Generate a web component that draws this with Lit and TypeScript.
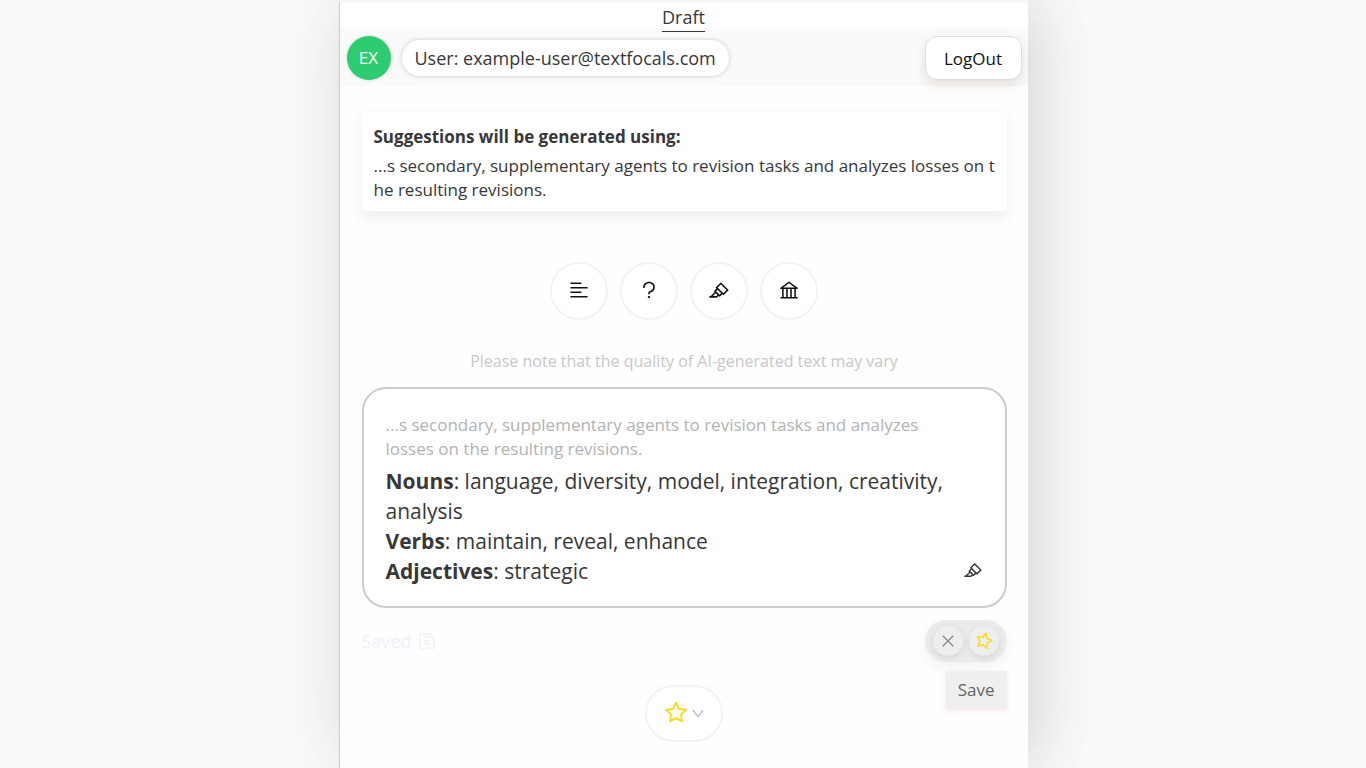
import { LitElement, html, css, svg } from "lit";
import { customElement, property } from "lit/decorators.js";

const ICONS = {
  align: svg`<path d="M120 230h496c4.400 0 8-3.600 8-8v-56c0-4.400-3.600-8-8-8H120c-4.400 0-8 3.600-8 8v56c0 4.400 3.600 8 8 8zm0 424h496c4.400 0 8-3.600 8-8v-56c0-4.400-3.600-8-8-8H120c-4.400 0-8 3.600-8 8v56c0 4.400 3.600 8 8 8zm784 140H120c-4.400 0-8 3.600-8 8v56c0 4.400 3.600 8 8 8h784c4.400 0 8-3.600 8-8v-56c0-4.400-3.600-8-8-8zm0-424H120c-4.400 0-8 3.600-8 8v56c0 4.400 3.600 8 8 8h784c4.400 0 8-3.600 8-8v-56c0-4.400-3.600-8-8-8z"/>`,
  question: svg`<path d="M764 280.9c-14-30.6-33.9-58.1-59.3-81.6C653.1 151.4 584.6 125 512 125s-141.1 26.4-192.7 74.2c-25.4 23.6-45.3 51-59.3 81.7-14.6 32-22 65.9-22 100.9v27c0 6.2 5 11.2 11.2 11.2h54c6.2 0 11.2-5 11.2-11.2v-27c0-99.5 88.6-180.4 197.6-180.4s197.6 80.9 197.6 180.4c0 40.8-14.5 79.2-42 111.2-27.2 31.7-65.600 54.4-108.1 64-24.3 5.5-46.2 19.2-61.7 38.8a110.85 110.85 0 0 0-23.9 68.600v31.4c0 6.2 5 11.2 11.2 11.2h54c6.2 0 11.2-5 11.2-11.2v-31.4c0-15.7 10.9-29.5 26-32.9 58.4-13.2 111.4-44.7 149.3-88.7 19.1-22.3 34-47.1 44.3-74 10.700-27.9 16.1-57.2 16.1-87 0-35-7.400-69-22-100.9zM512 787c-30.9 0-56 25.1-56 56s25.1 56 56 56 56-25.1 56-56-25.1-56-56-56z"/>`,
  highlight: svg`<path d="M957.6 507.4L603.2 158.2a7.9 7.9 0 0 0-11.2 0L353.3 393.4a8.03 8.03 0 0 0-.1 11.3l.1.1 40 39.4-117.2 115.3a8.03 8.03 0 0 0-.1 11.3l.1.1 39.5 38.9-189.1 187H72.1c-4.4 0-8.1 3.6-8.1 8V860c0 4.4 3.6 8 8 8h344.9c2.1 0 4.1-.8 5.6-2.3l76.1-75.6 40.4 39.8a7.9 7.9 0 0 0 11.2 0l117.1-115.6 40.1 39.5a7.9 7.9 0 0 0 11.2 0l238.7-235.2c3.4-3 3.4-8 .3-11.2zM389.8 796.2H229.6l134.4-133 80.1 78.9-54.3 54.1zm154.8-62.1L373.2 565.2l68.6-67.6 171.4 168.9-68.6 67.6zM713.1 658L450.3 399.1 597.6 254l262.8 259-147.3 145z"/>`,
  bank: svg`<path d="M894 462c30.9 0 43.8-39.7 18.7-58L530.8 126.2a31.81 31.81 0 0 0-37.6 0L111.3 404c-25.1 18.2-12.2 58 18.8 58H192v374h-72c-4.4 0-8 3.6-8 8v52c0 4.4 3.6 8 8 8h784c4.4 0 8-3.6 8-8v-52c0-4.4-3.6-8-8-8h-72V462h62zM512 196.7l271.1 197.2H240.9L512 196.7zM264 462h117v374H264V462zm189 0h117v374H453V462zm307 374H642V462h118v374z"/>`,
  save: svg`<path d="M893.3 293.3L730.7 130.7c-7.5-7.5-16.7-13-26.7-16V112H144c-17.7 0-32 14.3-32 32v736c0 17.7 14.3 32 32 32h736c17.7 0 32-14.3 32-32V338.5c0-17-6.7-33.2-18.7-45.2zM384 184h256v104H384V184zm456 656H184V184h136v136c0 17.7 14.3 32 32 32h320c17.7 0 32-14.3 32-32V205.8l136 136V840zM512 442c-79.5 0-144 64.5-144 144s64.5 144 144 144 144-64.5 144-144-64.5-144-144-144zm0 224c-44.2 0-80-35.8-80-80s35.8-80 80-80 80 35.8 80 80-35.8 80-80 80z"/>`,
  star: svg`<path d="M908.1 353.1l-253.9-36.9L540.7 86.1c-3.1-6.3-8.2-11.4-14.5-14.5-15.8-7.8-35-1.3-42.9 14.5L369.8 316.2l-253.9 36.9c-7 1-13.4 4.3-18.3 9.3a32.05 32.05 0 0 0 .6 45.3l183.7 179.1-43.4 252.9a31.95 31.95 0 0 0 46.4 33.7L512 754l227.1 119.4c6.2 3.3 13.4 4.4 20.3 3.2 17.4-3 29.1-19.5 26.1-36.9l-43.4-252.9 183.7-179.1c5-4.9 8.3-11.3 9.3-18.3 2.7-17.5-9.5-33.7-27-36.3zM664.8 561.6l36.1 210.3L512 672.7 323.1 772l36.1-210.3-152.8-149L417.6 382 512 190.7 606.4 382l211.2 30.7-152.8 148.9z"/>`,
  close: svg`<path d="M130 130L894 894M894 130L130 894" fill="none" stroke="currentColor" stroke-width="100"/>`,
  down: svg`<path d="M150 300L512 776L874 300" fill="none" stroke="currentColor" stroke-width="96"/>`,
};

type IconName = keyof typeof ICONS;

@customElement("ui-icon")
class UiIcon extends LitElement {
  @property() name: IconName = "star";

  static styles = css`
    :host {
      display: inline-flex;
      width: 20px;
      height: 20px;
      flex: none;
    }
    svg {
      width: 100%;
      height: 100%;
      fill: currentColor;
    }
  `;

  render() {
    return html`<svg viewBox="0 0 1024 1024" aria-hidden="true">${ICONS[this.name]}</svg>`;
  }
}

@customElement("app-root")
class AppRoot extends LitElement {
  static styles = css`
    :host {
      display: flex;
      justify-content: center;
      min-height: 100vh;
      overflow: hidden;
      background: #fafafa;
      color: #383838;
      font: 17px/24px "Open Sans", "Noto Sans", sans-serif;
    }
    * {
      box-sizing: border-box;
    }
    button {
      display: flex;
      align-items: center;
      justify-content: center;
      padding: 0;
      border: 0;
      font: inherit;
      background: #fff;
      color: #111;
      cursor: pointer;
    }
    h2,
    p {
      margin: 0;
    }
    .panel {
      width: 100%;
      max-width: 689px;
      border-left: 1px solid #ccc;
      border-top: 3px solid #f8f8f8;
      background: #fefefe;
      box-shadow: 0 0 100px rgba(0, 0, 0, 0.04), 12px 0 60px rgba(0, 0, 0, 0.12);
    }
    .tabs {
      display: flex;
      justify-content: center;
      height: 25px;
      background: #fff;
    }
    .tab {
      height: 29px;
      padding-top: 2px;
      border-bottom: 1px solid #333;
      color: #383838;
      font-size: 18px;
      text-decoration: none;
    }
    .header {
      display: flex;
      align-items: center;
      gap: 11px;
      height: 58px;
      padding: 2px 6px 0 7px;
      background: #fafafa;
    }
    .avatar {
      display: grid;
      place-items: center;
      width: 44px;
      height: 44px;
      border-radius: 50%;
      background: #2ecc71;
      color: #fff;
      box-shadow: 0 0 3px rgba(0, 0, 0, 0.2);
    }
    .user {
      padding: 6px 13px;
      border-radius: 18px;
      background: #fff;
      font-size: 18px;
      box-shadow: 0 0 5px rgba(0, 0, 0, 0.2);
    }
    .logout {
      width: 97px;
      height: 44px;
      margin-left: auto;
      padding-top: 2px;
      border: 1px solid #ddd;
      border-radius: 12px;
      box-shadow: 0 5px 12px rgba(80, 40, 20, 0.12);
    }
    .content {
      display: flex;
      flex-direction: column;
      padding: 26px 21px 0 22px;
    }
    .context {
      padding: 13px 8px 9px 12px;
      background: #fff;
      box-shadow: 0 6px 12px rgba(80, 60, 30, 0.08);
    }
    .context h2 {
      margin-bottom: 5px;
      font-size: 17px;
      line-height: 24px;
    }
    .context p {
      word-break: break-all;
    }
    .tools {
      display: flex;
      justify-content: center;
      gap: 12px;
      margin: 51px 0 29px;
    }
    .tool {
      width: 58px;
      height: 58px;
      padding-bottom: 2px;
      border: 2px solid #f3f3f3;
      border-radius: 50%;
    }
    .note {
      color: #c8c8c8;
      font-size: 16px;
      text-align: center;
    }
    .result {
      display: flex;
      align-items: flex-end;
      justify-content: space-between;
      margin-top: 14px;
      padding: 24px 22px 20px;
      border: 2px solid #ccc;
      border-radius: 24px;
      background: #fff;
    }
    .text {
      flex: 0 1 564px;
    }
    .source {
      margin-bottom: 5px;
      color: #b3b3b3;
    }
    .words {
      font-size: 21px;
      line-height: 30px;
    }
    .kind {
      margin-bottom: 6px;
    }
    .footer {
      display: flex;
      align-items: center;
      justify-content: space-between;
      margin-top: 12px;
    }
    .saved {
      display: flex;
      align-items: center;
      gap: 6px;
      color: #f0f0fc;
      font-size: 18px;
    }
    .actions {
      position: relative;
      display: flex;
      align-items: center;
      justify-content: space-between;
      width: 82px;
      height: 42px;
      padding: 0 8px;
      border-radius: 21px;
      background: #ebebeb;
      box-shadow: 0 5px 12px rgba(80, 40, 20, 0.06);
    }
    .round {
      width: 30px;
      height: 30px;
      border-radius: 50%;
      background: #eee;
      color: #888;
      box-shadow: 0 2px 6px rgba(80, 40, 20, 0.12);
    }
    .cross {
      width: 14px;
      height: 14px;
    }
    .gold {
      color: #ffd90f;
    }
    .tilted {
      transform: rotate(15deg);
    }
    .tip {
      position: absolute;
      top: 51px;
      right: 0;
      padding: 7px 12px 6px;
      background: #efefef;
      color: #666;
      box-shadow: 0 2px 5px rgba(120, 40, 20, 0.12);
    }
    .favorites {
      gap: 2px;
      align-self: center;
      width: 78px;
      height: 57px;
      margin-top: 23px;
      padding-bottom: 2px;
      border: 2px solid #f3f3f3;
      border-radius: 29px;
      color: #b8b8b8;
    }
    .medium {
      width: 22px;
      height: 22px;
    }
    .large {
      width: 26px;
      height: 26px;
    }
    .small {
      width: 14px;
      height: 14px;
    }
  `;

  private tools: { icon: IconName; label: string }[] = [
    { icon: "align", label: "Summaries" },
    { icon: "question", label: "Questions" },
    { icon: "highlight", label: "Word highlights" },
    { icon: "bank", label: "Advice" },
  ];

  private words = [
    { kind: "Nouns", list: "language, diversity, model, integration, creativity, analysis" },
    { kind: "Verbs", list: "maintain, reveal, enhance" },
    { kind: "Adjectives", list: "strategic" },
  ];

  render() {
    return html`
      <main class="panel">
        <nav class="tabs"><a class="tab" href="#draft">Draft</a></nav>
        <header class="header">
          <div class="avatar">EX</div>
          <div class="user">User: example-user@textfocals.com</div>
          <button class="logout">LogOut</button>
        </header>
        <div class="content">
          <section class="context">
            <h2>Suggestions will be generated using:</h2>
            <p>...s secondary, supplementary agents to revision tasks and analyzes losses on the resulting revisions.</p>
          </section>
          <div class="tools">
            ${this.tools.map(
              (t) =>
                html`<button class="tool" aria-label=${t.label}>
                  <ui-icon class="medium" name=${t.icon}></ui-icon>
                </button>`
            )}
          </div>
          <p class="note">Please note that the quality of AI-generated text may vary</p>
          <article class="result">
            <div class="text">
              <p class="source">...s secondary, supplementary agents to revision tasks and analyzes losses on the resulting revisions.</p>
              ${this.words.map((w) => html`<p class="words"><b>${w.kind}</b>: ${w.list}</p>`)}
            </div>
            <ui-icon class="kind" name="highlight"></ui-icon>
          </article>
          <div class="footer">
            <div class="saved">Saved <ui-icon name="save"></ui-icon></div>
            <div class="actions">
              <button class="round" aria-label="Dismiss"><ui-icon class="cross" name="close"></ui-icon></button>
              <button class="round" aria-label="Save suggestion">
                <ui-icon class="gold tilted" name="star"></ui-icon>
              </button>
              <div class="tip" role="tooltip">Save</div>
            </div>
          </div>
          <button class="favorites" aria-label="Saved suggestions">
            <ui-icon class="gold large" name="star"></ui-icon><ui-icon class="small" name="down"></ui-icon>
          </button>
        </div>
      </main>
    `;
  }
}
